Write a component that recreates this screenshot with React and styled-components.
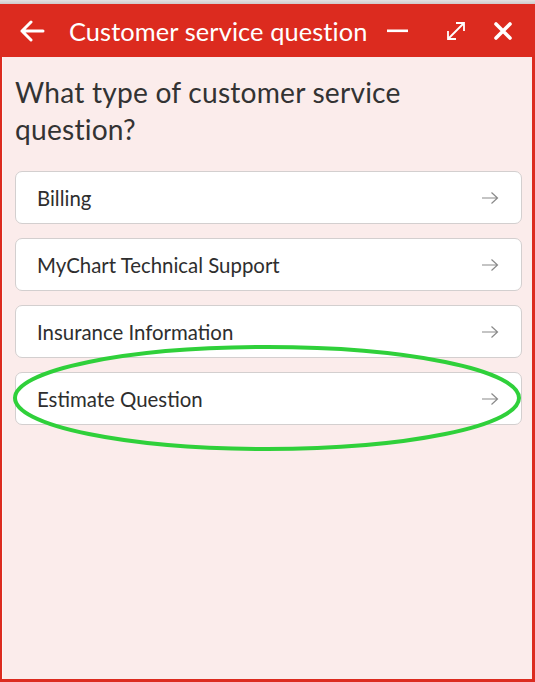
import React from "react";
import styled, { createGlobalStyle } from "styled-components";

const Global = createGlobalStyle`
  html, body { margin: 0; padding: 0; }
  body { background: #ffffff; font-family: "Lato", "Open Sans", sans-serif; }
  * { box-sizing: border-box; }
`;

const Frame = styled.div`
  width: 535px;
  height: 682px;
  display: flex;
  flex-direction: column;
  position: relative;
  overflow: hidden;
`;

const TopStrip = styled.div`
  height: 4px;
  background: linear-gradient(#e4e2e2, #cfcaca);
  flex: none;
`;

const Window = styled.div`
  flex: 1;
  display: flex;
  flex-direction: column;
  background: #dc2b1f;
  padding: 0 3px 3px 2px;
`;

const Header = styled.div`
  height: 53px;
  display: flex;
  align-items: center;
  color: #ffffff;
  padding: 0 0 0 17px;
  flex: none;
`;

const Title = styled.div`
  font-family: "Lato", sans-serif;
  font-size: 25.4px;
  font-weight: 400;
  margin-left: 24px;
  flex: 1;
  letter-spacing: 0.1px;
`;

const IconBtn = styled.div`
  width: ${(p) => p.$w || 24}px;
  display: flex;
  align-items: center;
  justify-content: center;
  margin-right: ${(p) => p.$mr || 0}px;
`;

const Body = styled.div`
  flex: 1;
  background: #fbeceb;
  padding: 17px 10px 0 12px;
  display: flex;
  flex-direction: column;
  border-left: 1px solid #fdf6f5;
`;

const Heading = styled.h1`
  margin: 0 0 23px 0;
  font-family: "Lato", sans-serif;
  font-weight: 400;
  font-size: 28.2px;
  line-height: 37px;
  color: #333333;
  letter-spacing: 0.2px;
`;

const List = styled.div`
  display: flex;
  flex-direction: column;
  gap: 14px;
`;

const Option = styled.div`
  height: 53px;
  background: #ffffff;
  border: 1px solid #d3cfcf;
  border-radius: 7px;
  display: flex;
  align-items: center;
  justify-content: space-between;
  padding: 0 22px 0 21px;
  font-family: "Lato", sans-serif;
  font-size: 20.4px;
  color: #2e2e2e;
`;

const Ellipse = styled.svg`
  position: absolute;
  left: 0;
  top: 0;
  pointer-events: none;
`;

const Arrow = () => (
  <svg width="18" height="14" viewBox="0 0 18 14">
    <path d="M1 7 H16 M10.5 1.5 L16.5 7 L10.5 12.5" fill="none" stroke="#8a8a8a" strokeWidth="1.2" />
  </svg>
);

const options = ["Billing", "MyChart Technical Support", "Insurance Information", "Estimate Question"];

export default function App() {
  return (
    <Frame>
      <Global />
      <TopStrip />
      <Window>
        <Header>
          <IconBtn $w={26}>
            <svg width="26" height="22" viewBox="0 0 26 22">
              <path d="M24 11 H3 M12 2 L3 11 L12 20" fill="none" stroke="#fff" strokeWidth="3" strokeLinecap="round" strokeLinejoin="round" />
            </svg>
          </IconBtn>
          <Title>Customer service question</Title>
          <IconBtn $w={22} $mr={36}>
            <svg width="22" height="4" viewBox="0 0 22 4">
              <rect x="0" y="0.5" width="21" height="2.6" fill="#fff" />
            </svg>
          </IconBtn>
          <IconBtn $w={22} $mr={26}>
            <svg width="22" height="22" viewBox="0 0 22 22">
              <path d="M3 19 L19 3 M11 3 H19 V11 M3 11 V19 H11" fill="none" stroke="#fff" strokeWidth="1.8" />
            </svg>
          </IconBtn>
          <IconBtn $w={20} $mr={19}>
            <svg width="18" height="18" viewBox="0 0 18 18">
              <path d="M2 2 L16 16 M16 2 L2 16" fill="none" stroke="#fff" strokeWidth="3.6" strokeLinecap="round" />
            </svg>
          </IconBtn>
        </Header>
        <Body>
          <Heading>What type of customer service question?</Heading>
          <List>
            {options.map((o) => (
              <Option key={o}>
                <span>{o}</span>
                <Arrow />
              </Option>
            ))}
          </List>
        </Body>
      </Window>
      <Ellipse width="535" height="682" viewBox="0 0 535 682">
        <ellipse cx="267" cy="398" rx="252" ry="51" fill="none" stroke="#2fd03a" strokeWidth="4" />
      </Ellipse>
    </Frame>
  );
}
